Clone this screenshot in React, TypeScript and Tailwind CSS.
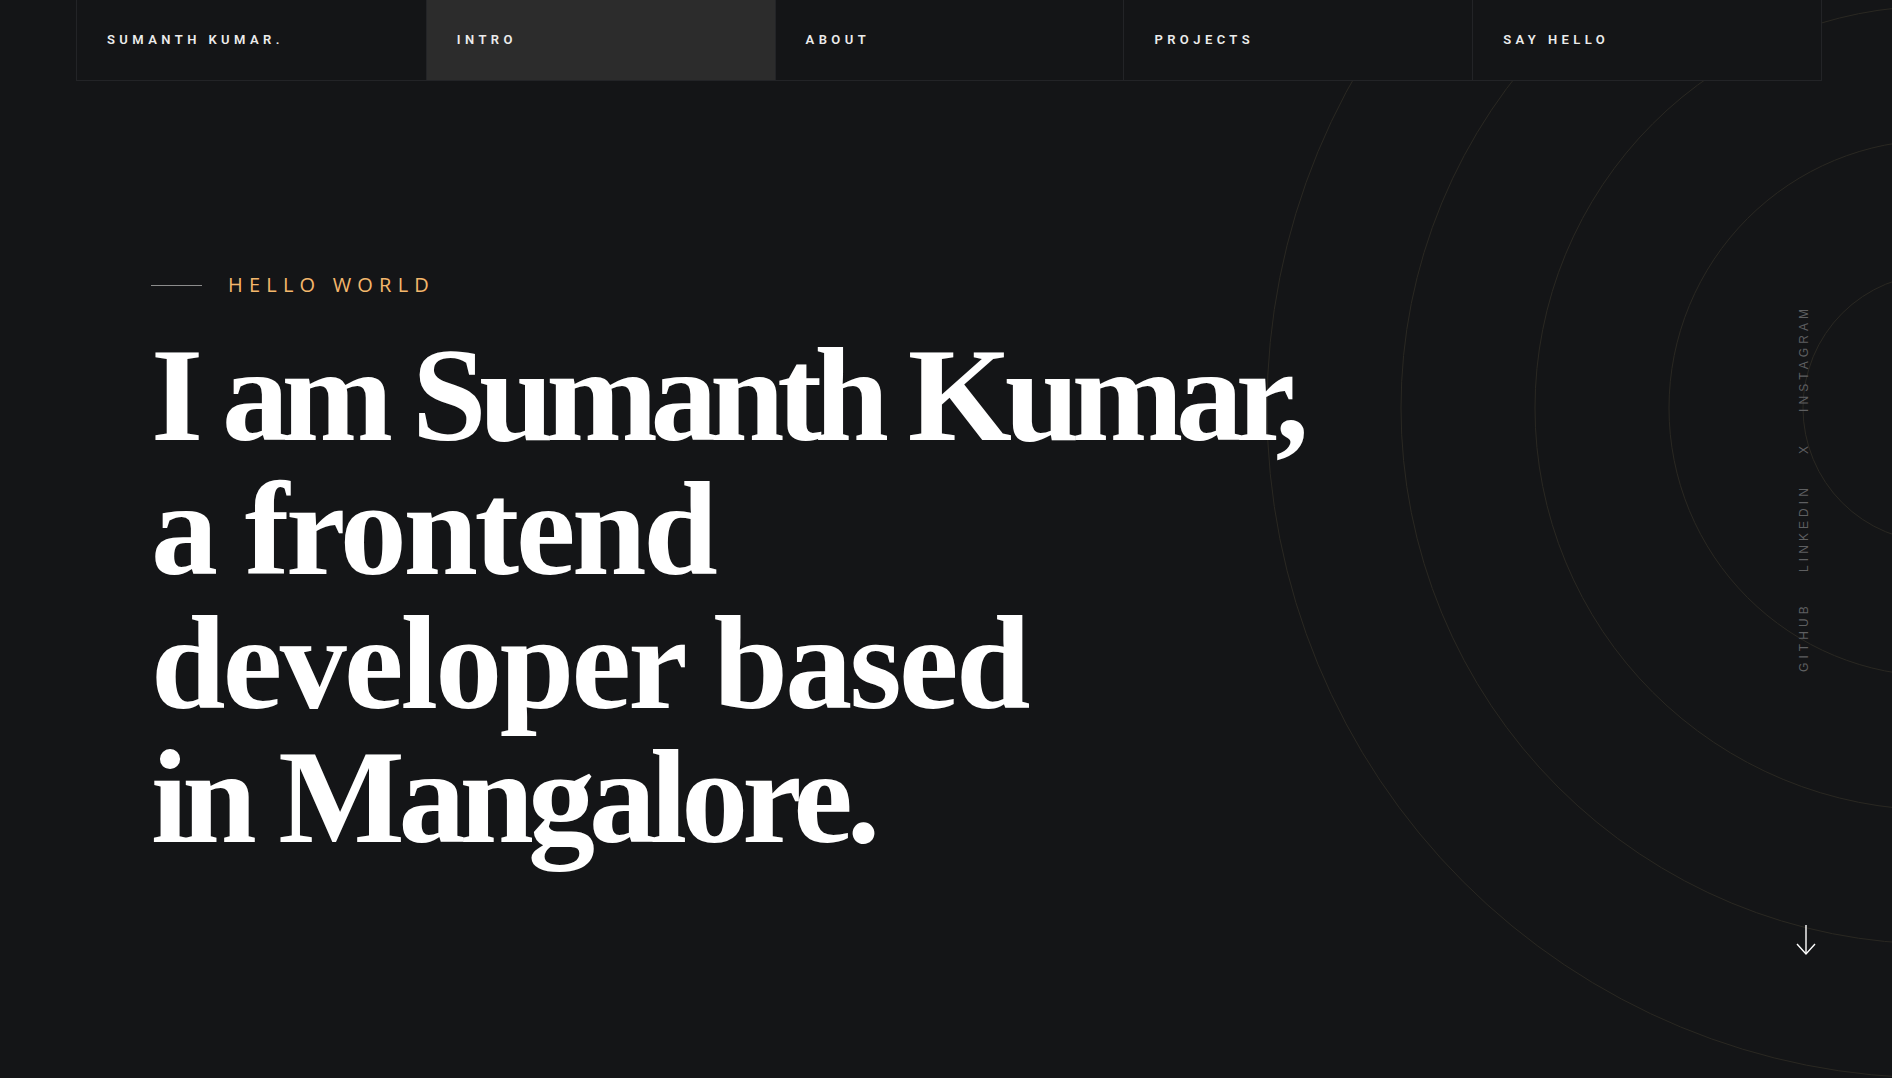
import { useState } from 'react'

export default function App() {
  const [active, setActive] = useState('Intro')
  const links = ['Intro', 'About', 'Projects', 'Say Hello']
  const socials = ['Github', 'Linkedin', 'X', 'Instagram']
  const rings = [134, 268, 402, 536, 670]

  return (
    <div className="relative min-h-[1078px] overflow-hidden bg-[#141517] font-['Roboto',sans-serif]">
      {/* background rings */}
      <svg className="pointer-events-none absolute left-0 top-0" width="1892" height="1078" viewBox="0 0 1892 1078" fill="none">
        {rings.map((r) => (
          <circle key={r} cx="1937" cy="408" r={r} stroke="#2a2822" strokeWidth="1" />
        ))}
      </svg>

      {/* Top nav */}
      <nav className="relative z-10 ml-[76px] grid h-[81px] w-[1746px] grid-cols-5 border-x border-b border-[#232427] bg-[#141517]">
        <a className="flex items-center pl-[30px] text-[13px] font-semibold uppercase tracking-[0.34em] text-[#ececec]">
          Sumanth Kumar.
        </a>
        {links.map((link) => (
          <button
            key={link}
            onClick={() => setActive(link)}
            className={`flex items-center border-l border-[#232427] pl-[30px] text-left text-[13px] font-semibold uppercase tracking-[0.34em] text-[#ececec] ${
              active === link ? 'bg-[#2c2c2c]' : 'bg-transparent'
            }`}
          >
            {link}
          </button>
        ))}
      </nav>

      <div className="relative flex">
        {/* Hero */}
        <main className="pl-[151px] pt-[190px]">
          <div className="flex h-[28px] items-center">
            <span className="h-px w-[51px] bg-[#8c8c8c]" />
            <span className="ml-[26px] font-['Open_Sans',sans-serif] text-[20px] uppercase leading-[28px] tracking-[0.31em] text-[#f4b76c]">
              Hello World
            </span>
          </div>
          <h1 className="mt-[29px] font-['Liberation_Serif',serif] text-[134px] font-bold leading-[134px] text-white">
            <span className="block whitespace-nowrap tracking-[-0.055em]">I am Sumanth Kumar,</span>
            <span className="block whitespace-nowrap tracking-[-0.025em]">a frontend</span>
            <span className="block whitespace-nowrap tracking-[-0.02em]">developer based</span>
            <span className="block whitespace-nowrap tracking-[-0.045em]">in Mangalore.</span>
          </h1>
        </main>

        {/* Side rail */}
        <aside className="ml-auto mr-[68px] flex w-[40px] flex-col items-center pt-[227px]">
          <div className="flex h-[364px] rotate-180 gap-[30px] [writing-mode:vertical-rl]">
            {socials.map((s) => (
              <a key={s} className="font-['Liberation_Sans',sans-serif] text-[12px] uppercase tracking-[0.34em] text-[#5e5f61]">
                {s}
              </a>
            ))}
          </div>
          <svg className="ml-[4px] mt-[252px]" width="20" height="32" viewBox="0 0 20 32" fill="none" stroke="#ffffff" strokeWidth="1.4">
            <path d="M10 1 V30" />
            <path d="M1 20 L10 30 L19 20" />
          </svg>
        </aside>
      </div>
    </div>
  )
}
